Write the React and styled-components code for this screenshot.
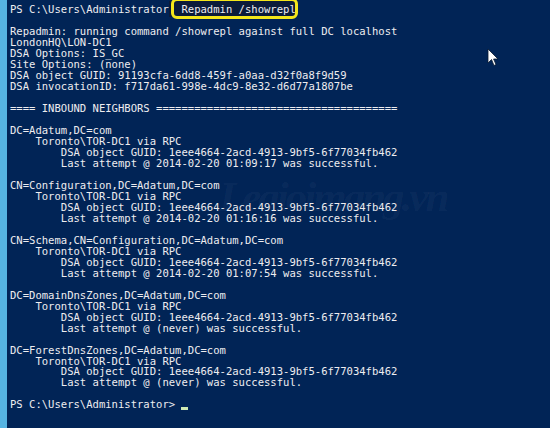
import React from "react";
import styled, { createGlobalStyle } from "styled-components";

const Global = createGlobalStyle`
  html, body {
    margin: 0;
    padding: 0;
    background: #012456;
    overflow: hidden;
  }
`;

const Window = styled.div`
  display: flex;
  width: 550px;
  height: 428px;
  overflow: hidden;
`;

const Strip = styled.div`
  width: 7px;
  flex: none;
  background: #56b4e2;
`;

const Console = styled.div`
  position: relative;
  flex: 1;
  background: #012456;
  padding: 4px 0 0 3px;
  overflow: hidden;
`;

const Out = styled.pre`
  margin: 0;
  font-family: "DejaVu Sans Mono", "Liberation Mono", monospace;
  font-size: 10.55px;
  line-height: 10.98px;
  color: #eeedf0;
  white-space: pre;
`;

const Mark = styled.span`
  position: relative;
  display: inline-block;
  &::after {
    content: "";
    position: absolute;
    left: 2px;
    right: -2px;
    top: -6px;
    bottom: -4px;
    border: 3px solid #f4e61a;
    border-radius: 6px;
  }
`;

const MarkFill = styled.span`
  background: #0b1b3a;
  padding: 2px 0;
`;

const Hidden = styled.span`
  color: #0b1b3a;
`;

const Caret = styled.span`
  display: inline-block;
  width: 7px;
  height: 3px;
  background: #cfe9b4;
  vertical-align: -2px;
`;

const Watermark = styled.div`
  position: absolute;
  left: 212px;
  top: 172px;
  font-family: "Liberation Serif", serif;
  font-style: italic;
  font-weight: bold;
  font-size: 43px;
  letter-spacing: -3px;
  color: rgba(255, 255, 255, 0.045);
  pointer-events: none;
  white-space: nowrap;
`;

const Pointer = styled.svg`
  position: absolute;
  left: 480px;
  top: 48px;
`;

const body = `
Repadmin: running command /showrepl against full DC localhost
LondonHQ\\LON-DC1
DSA Options: IS_GC
Site Options: (none)
DSA object GUID: 91193cfa-6dd8-459f-a0aa-d32f0a8f9d59
DSA invocationID: f717da61-998e-4dc9-8e32-d6d77a1807be

==== INBOUND NEIGHBORS ======================================

DC=Adatum,DC=com
    Toronto\\TOR-DC1 via RPC
        DSA object GUID: 1eee4664-2acd-4913-9bf5-6f77034fb462
        Last attempt @ 2014-02-20 01:09:17 was successful.

CN=Configuration,DC=Adatum,DC=com
    Toronto\\TOR-DC1 via RPC
        DSA object GUID: 1eee4664-2acd-4913-9bf5-6f77034fb462
        Last attempt @ 2014-02-20 01:16:16 was successful.

CN=Schema,CN=Configuration,DC=Adatum,DC=com
    Toronto\\TOR-DC1 via RPC
        DSA object GUID: 1eee4664-2acd-4913-9bf5-6f77034fb462
        Last attempt @ 2014-02-20 01:07:54 was successful.

DC=DomainDnsZones,DC=Adatum,DC=com
    Toronto\\TOR-DC1 via RPC
        DSA object GUID: 1eee4664-2acd-4913-9bf5-6f77034fb462
        Last attempt @ (never) was successful.

DC=ForestDnsZones,DC=Adatum,DC=com
    Toronto\\TOR-DC1 via RPC
        DSA object GUID: 1eee4664-2acd-4913-9bf5-6f77034fb462
        Last attempt @ (never) was successful.

`;

export default function App() {
  return (
    <>
      <Global />
      <Window>
        <Strip />
        <Console>
          <Watermark>Legioimang.vn</Watermark>
          <Out>
            {"PS C:\\Users\\Administrator"}
            <Mark>
              <MarkFill>
                <Hidden>{">"}</Hidden>
                {" Repadmin /showrepl"}
              </MarkFill>
            </Mark>
            {"\n"}
            {body}
            {"PS C:\\Users\\Administrator> "}
            <Caret />
          </Out>
          <Pointer width="13" height="20" viewBox="0 0 13 20">
            <path
              d="M1 1 L1 15 L4.5 11.5 L7 17.5 L9 16.6 L6.6 11 L11 11 Z"
              fill="#ffffff"
              stroke="#0a1a30"
              strokeWidth="0.8"
            />
          </Pointer>
        </Console>
      </Window>
    </>
  );
}
